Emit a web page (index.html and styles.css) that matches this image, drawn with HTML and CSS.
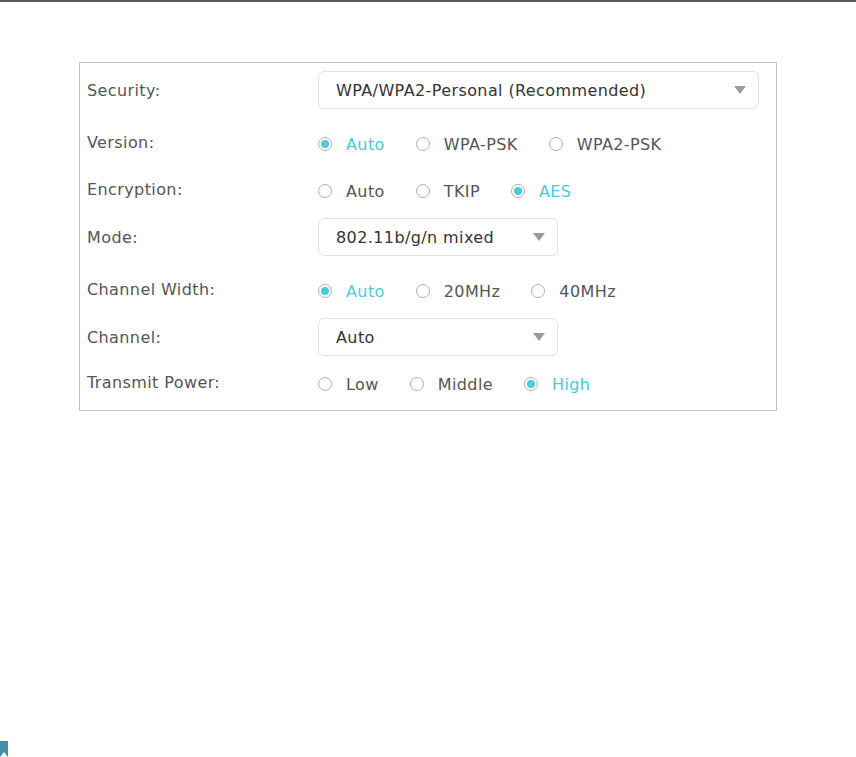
FILE: index.html
```html
<!DOCTYPE html>
<html lang="en">
<head>
    <meta charset="UTF-8">
    <meta name="viewport" content="width=device-width, initial-scale=1.0">
    <title>Wireless Settings</title>
    <link rel="stylesheet" href="styles.css">
</head>
<body>
    <div class="top-line"></div>

    <div class="panel">
        <div class="row">
            <span class="label">Security:</span>
            <div class="select wide">
                <span>WPA/WPA2-Personal (Recommended)</span>
                <span class="arrow"></span>
            </div>
        </div>

        <div class="row radio-row after-select">
            <span class="label">Version:</span>
            <div class="options">
                <label class="option checked"><span class="radio"></span>Auto</label>
                <label class="option"><span class="radio"></span>WPA-PSK</label>
                <label class="option"><span class="radio"></span>WPA2-PSK</label>
            </div>
        </div>

        <div class="row radio-row">
            <span class="label">Encryption:</span>
            <div class="options">
                <label class="option"><span class="radio"></span>Auto</label>
                <label class="option"><span class="radio"></span>TKIP</label>
                <label class="option checked"><span class="radio"></span>AES</label>
            </div>
        </div>

        <div class="row after-radio">
            <span class="label">Mode:</span>
            <div class="select">
                <span>802.11b/g/n mixed</span>
                <span class="arrow"></span>
            </div>
        </div>

        <div class="row radio-row after-select">
            <span class="label">Channel Width:</span>
            <div class="options">
                <label class="option checked"><span class="radio"></span>Auto</label>
                <label class="option"><span class="radio"></span>20MHz</label>
                <label class="option"><span class="radio"></span>40MHz</label>
            </div>
        </div>

        <div class="row after-radio">
            <span class="label">Channel:</span>
            <div class="select">
                <span>Auto</span>
                <span class="arrow"></span>
            </div>
        </div>

        <div class="row radio-row last">
            <span class="label">Transmit Power:</span>
            <div class="options">
                <label class="option"><span class="radio"></span>Low</label>
                <label class="option"><span class="radio"></span>Middle</label>
                <label class="option checked"><span class="radio"></span>High</label>
            </div>
        </div>
    </div>

    <!-- little bookmark tab in the corner -->
    <svg class="bookmark" width="8" height="16" viewBox="0 0 8 16">
        <path d="M0 0 H8 V16 L4 11 L0 16 Z" fill="#3f8fa6"/>
    </svg>
</body>
</html>
```

FILE: styles.css
```css
body {
    font-family: "DejaVu Sans", Verdana, sans-serif;
    font-size: 16px;
    letter-spacing: 0.4px;
    color: #555;
    background-color: #fff;
    margin: 0;
    padding: 0;
}

.top-line {
    height: 2px;
    background-color: #5a5a5a;
}

.panel {
    width: 698px;
    margin: 60px 0 0 79px;
    padding: 8px 0 12px 7px;
    box-sizing: border-box;
    border: 1px solid #c4c4c4;
}

.row {
    display: flex;
    align-items: center;
    height: 38px;
}

.row + .row {
    margin-top: 15px;
}

.row.after-select {
    margin-top: 17px;
}

.row.after-radio {
    margin-top: 13px;
}

.row.last {
    margin-top: 10px;
}

.radio-row {
    height: 32px;
}

/* radios sit a touch lower than their label */
.radio-row .options {
    padding-top: 4px;
}

.label {
    width: 231px;
    flex-shrink: 0;
    color: #555;
}

.select {
    width: 240px;
    height: 38px;
    box-sizing: border-box;
    border: 1px solid #e2e2e2;
    border-radius: 6px;
    padding: 0 12px 0 17px;
    display: flex;
    align-items: center;
    justify-content: space-between;
    color: #333;
}

.select.wide {
    width: 441px;
}

.arrow {
    width: 0;
    height: 0;
    border-left: 6px solid transparent;
    border-right: 6px solid transparent;
    border-top: 8px solid #9a9a9a;
}

.options {
    display: flex;
    align-items: center;
    gap: 31px;
}

.option {
    display: flex;
    align-items: center;
    gap: 14px;
    color: #555;
}

.radio {
    width: 14px;
    height: 14px;
    box-sizing: border-box;
    border: 1px solid #b0b0b0;
    border-radius: 50%;
    display: flex;
    align-items: center;
    justify-content: center;
}

.option.checked {
    color: #4acbd6;
}

.option.checked .radio::after {
    content: "";
    width: 8px;
    height: 8px;
    border-radius: 50%;
    background-color: #4acbd6;
}

.bookmark {
    position: fixed;
    left: 0;
    bottom: 0;
    display: block;
}
```
